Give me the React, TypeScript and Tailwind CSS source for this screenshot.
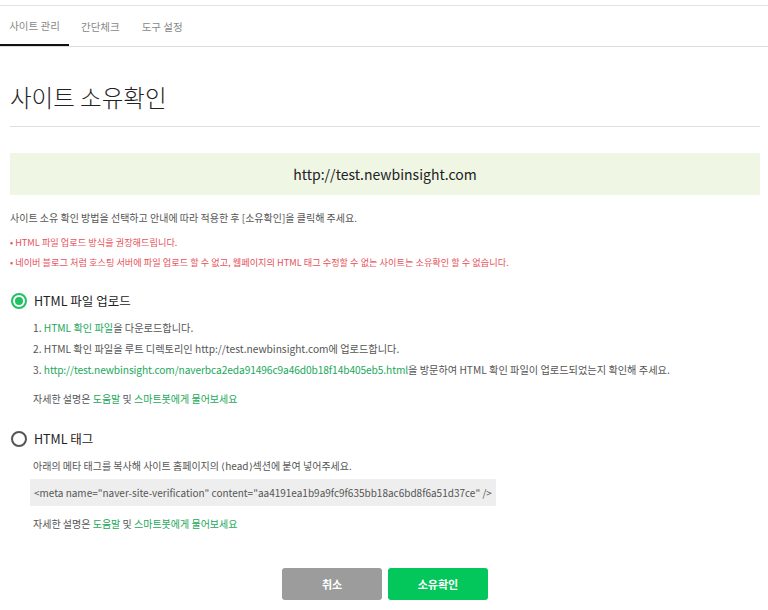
import { useState } from "react";

const FONT = { fontFamily: '"Noto Sans CJK KR", "Noto Sans", sans-serif' };

function Radio({ checked }: { checked: boolean }) {
  return (
    <span
      className={`flex h-[16px] w-[16px] items-center justify-center rounded-full border-2 ${
        checked ? "border-[#1ec265]" : "border-[#555]"
      }`}
    >
      {checked && <span className="h-[8px] w-[8px] rounded-full bg-[#1ec265]" />}
    </span>
  );
}

function HelpLine() {
  return (
    <p className="text-[10px] text-[#555]">
      자세한 설명은 <span className="text-[#1aa85a]">도움말</span> 및{" "}
      <span className="text-[#1aa85a]">스마트봇에게 물어보세요</span>
    </p>
  );
}

// Site ownership verification page
export default function App() {
  const [method, setMethod] = useState<"file" | "tag">("file");
  const site = "http://test.newbinsight.com";

  return (
    <div className="min-h-[610px] bg-white pt-[5px]" style={FONT}>
      <div className="border-t border-[#e2e2e2]">
        <nav className="flex h-[41px] border-b border-[#dcdcdc] text-[10.5px] text-[#888]">
          <div className="flex w-[69px] items-center justify-center border-b-2 border-[#111] pt-[2px]">
            사이트 관리
          </div>
          <div className="flex items-center px-[12px] pt-[2px]">간단체크</div>
          <div className="flex items-center px-[10px] pt-[2px]">도구 설정</div>
        </nav>
      </div>

      <div className="w-[760px] pl-[10px]">
        <h1 className="border-b border-[#e0e0e0] pt-[33px] pb-[12px] text-[23.5px] leading-[34px] font-light text-[#222]">
          사이트 소유확인
        </h1>

        <div className="mt-[26px] flex h-[42px] items-center justify-center bg-[#eff6e4] text-[14px] text-[#222]">
          {site}
        </div>

        <p className="mt-[15px] text-[10px] text-[#555]">
          사이트 소유 확인 방법을 선택하고 안내에 따라 적용한 후 [소유확인]을 클릭해 주세요.
        </p>
        <ul className="mt-[10px] space-y-[6px] text-[9.2px] leading-[14px] text-[#e8505a]">
          <li>• HTML 파일 업로드 방식을 권장해드립니다.</li>
          <li>• 네이버 블로그 처럼 호스팅 서버에 파일 업로드 할 수 없고, 웹페이지의 HTML 태그 수정할 수 없는 사이트는 소유확인 할 수 없습니다.</li>
        </ul>

        <section className="mt-[23px]">
          <button
            onClick={() => setMethod("file")}
            className="flex items-center gap-[7px] pl-[1px] text-[12.5px] text-[#222]"
          >
            <Radio checked={method === "file"} />
            HTML 파일 업로드
          </button>
          <ol className="mt-[9px] space-y-[6px] pl-[23px] text-[10.2px] text-[#555]">
            <li>
              1. <span className="text-[#1aa85a]">HTML 확인 파일</span>을 다운로드합니다.
            </li>
            <li>2. HTML 확인 파일을 루트 디렉토리인 {site}에 업로드합니다.</li>
            <li>
              3.{" "}
              <span className="text-[#1aa85a] tracking-[-0.1px]">
                {site}/naverbca2eda91496c9a46d0b18f14b405eb5.html
              </span>
              을 방문하여 HTML 확인 파일이 업로드되었는지 확인해 주세요.
            </li>
          </ol>
          <div className="mt-[13px] pl-[23px]">
            <HelpLine />
          </div>
        </section>

        <section className="mt-[24px]">
          <button
            onClick={() => setMethod("tag")}
            className="flex items-center gap-[7px] pl-[1px] text-[12.5px] text-[#222]"
          >
            <Radio checked={method === "tag"} />
            HTML 태그
          </button>
          <div className="pl-[20px]">
            <p className="mt-[10px] pl-[3px] text-[10px] text-[#555]">
              아래의 메타 태그를 복사해 사이트 홈페이지의 ⟨head⟩섹션에 붙여 넣어주세요.
            </p>
            <div className="mt-[6px] inline-block bg-[#eeeeee] px-[4px] pt-[6px] pb-[6px] text-[10px] text-[#555]">
              {'<meta name="naver-site-verification" content="aa4191ea1b9a9fc9f635bb18ac6bd8f6a51d37ce" />'}
            </div>
            <div className="mt-[10px] pl-[3px]">
              <HelpLine />
            </div>
          </div>
        </section>

        <div className="mt-[37px] flex justify-center gap-[6px]">
          <button className="h-[32px] w-[100px] rounded-[3px] bg-[#9c9c9c] text-[11px] font-bold text-white">
            취소
          </button>
          <button className="h-[32px] w-[100px] rounded-[3px] bg-[#03c75a] text-[11px] font-bold text-white">
            소유확인
          </button>
        </div>
      </div>
    </div>
  );
}
